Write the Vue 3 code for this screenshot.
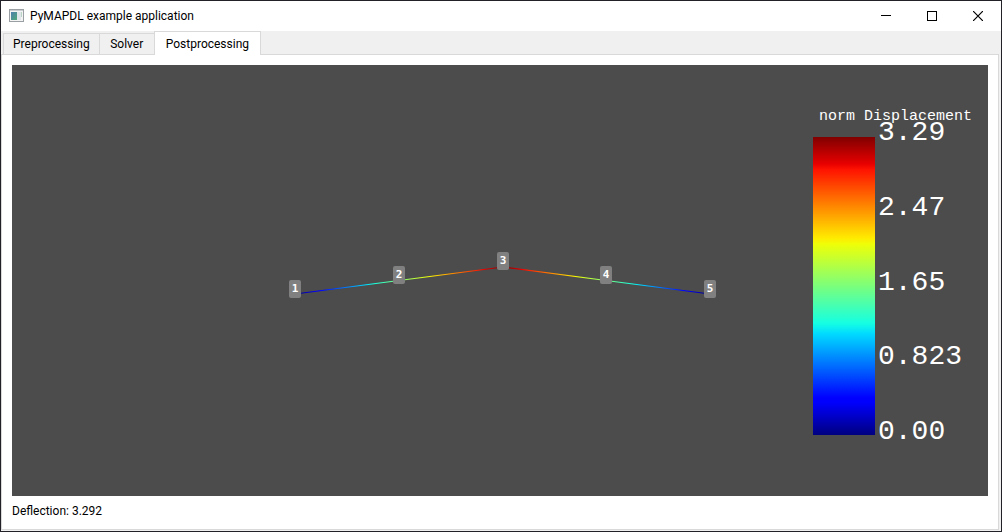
<script setup>
import { ref } from 'vue'

const tabs = ['Preprocessing', 'Solver', 'Postprocessing']
const active = ref('Postprocessing')

const ticks = ['3.29', '2.47', '1.65', '0.823', '0.00']

const nodes = [
  { id: 1, x: 283, y: 224 },
  { id: 2, x: 387, y: 210 },
  { id: 3, x: 491, y: 196 },
  { id: 4, x: 594, y: 210 },
  { id: 5, x: 698, y: 224 },
]

const jet = [
  [0, '#000080'], [0.11, '#0000ff'], [0.125, '#0000ff'], [0.34, '#00dbff'],
  [0.375, '#15ffe2'], [0.64, '#eeff08'], [0.66, '#ffec00'],
  [0.89, '#ff1300'], [0.91, '#e80000'], [1, '#800000'],
]
</script>

<template>
  <div class="window">
    <header class="titlebar">
      <svg class="app-icon" width="16" height="14" viewBox="0 0 16 14" aria-hidden="true">
        <defs>
          <linearGradient id="pane" x1="0" y1="0" x2="1" y2="1">
            <stop offset="0" stop-color="#4d7fae" />
            <stop offset="1" stop-color="#50a878" />
          </linearGradient>
        </defs>
        <rect x="0.5" y="0.5" width="14" height="12" fill="#f4f4f4" stroke="#9a9fa3" />
        <rect x="1" y="1" width="13" height="1" fill="#c9cdd0" />
        <rect x="2" y="3" width="6" height="8" fill="url(#pane)" />
        <rect x="8" y="3" width="4" height="8" fill="#dfe5e8" />
        <rect x="12" y="3" width="1" height="5" fill="#b9d3c4" />
      </svg>
      <h1 class="title">PyMAPDL example application</h1>
      <button class="control" type="button" aria-label="Minimize">
        <svg width="10" height="10" viewBox="0 0 10 10" shape-rendering="crispEdges"><path d="M0 4.5H10" stroke="#000" /></svg>
      </button>
      <button class="control" type="button" aria-label="Maximize">
        <svg width="10" height="10" viewBox="0 0 10 10" shape-rendering="crispEdges"><rect x="0.5" y="0.5" width="9" height="9" fill="none" stroke="#000" /></svg>
      </button>
      <button class="control" type="button" aria-label="Close">
        <svg width="10" height="10" viewBox="0 0 10 10"><path d="M0 0L10 10M10 0L0 10" stroke="#000" stroke-width="1.2" /></svg>
      </button>
    </header>

    <nav class="tabs" role="tablist">
      <button
        v-for="tab in tabs"
        :key="tab"
        type="button"
        role="tab"
        class="tab"
        :class="{ active: tab === active }"
        :aria-selected="tab === active"
        @click="active = tab"
      >{{ tab }}</button>
    </nav>

    <main class="pane">
      <section class="plot">
        <svg class="scene" viewBox="0 0 976 431" role="img" aria-label="Beam displacement">
          <defs>
            <linearGradient id="rise" gradientUnits="userSpaceOnUse" x1="283" y1="0" x2="491" y2="0">
              <stop v-for="s in jet" :key="s[0]" :offset="s[0]" :stop-color="s[1]" />
            </linearGradient>
            <linearGradient id="fall" gradientUnits="userSpaceOnUse" x1="698" y1="0" x2="491" y2="0">
              <stop v-for="s in jet" :key="s[0]" :offset="s[0]" :stop-color="s[1]" />
            </linearGradient>
          </defs>
          <path d="M283 229L387 215.500L491 202" stroke="url(#rise)" stroke-width="1.200" fill="none" />
          <path d="M491 202L594 215.500L698 229" stroke="url(#fall)" stroke-width="1.200" fill="none" />
          <g v-for="n in nodes" :key="n.id">
            <rect :x="n.x - 6" :y="n.y - 9" width="12" height="18" rx="2" fill="#808080" />
            <text class="node-label" :x="n.x" :y="n.y + 3">{{ n.id }}</text>
          </g>
        </svg>
        <aside class="legend">
          <h2 class="legend-title">norm Displacement</h2>
          <div class="scale">
            <div class="bar"></div>
            <ul class="ticks">
              <li v-for="t in ticks" :key="t">{{ t }}</li>
            </ul>
          </div>
        </aside>
      </section>
      <p class="status">Deflection: 3.292</p>
    </main>
  </div>
</template>

<style>
body {
  margin: 0;
}
</style>

<style scoped>
.window {
  box-sizing: border-box;
  display: flex;
  flex-direction: column;
  min-height: 100vh;
  border: 1px solid #222127;
  background: #f0f0f0;
  color: #000;
  font-family: Roboto, "Noto Sans", sans-serif;
  font-size: 12px;
}

.titlebar {
  display: flex;
  align-items: center;
  height: 30px;
  padding-left: 8px;
  background: #fff;
}

.title {
  flex: 1;
  margin: 0 0 0 5px;
  font-size: 12px;
  font-weight: 400;
}

.control {
  display: flex;
  align-items: center;
  justify-content: center;
  width: 46px;
  height: 28px;
  padding: 0;
  border: 0;
  background: transparent;
}

.tabs {
  display: flex;
  align-items: flex-end;
  height: 23px;
  padding-left: 2px;
}

.tab {
  box-sizing: border-box;
  min-width: 56px;
  height: 21px;
  margin-right: -1px;
  padding: 0 9px;
  border: 1px solid #d9d9d9;
  border-bottom: 0;
  background: #f0f0f0;
  color: #000;
  font: inherit;
  line-height: 20px;
}

.tab.active {
  position: relative;
  height: 24px;
  margin-bottom: -1px;
  padding: 0 11px;
  background: #fff;
}

.pane {
  display: flex;
  flex: 1;
  flex-direction: column;
  margin: 0 2px 1px 0;
  padding: 10px;
  border: 1px solid #d9d9d9;
  background: #fff;
}

.plot {
  position: relative;
  flex: 1;
  min-height: 400px;
  background: #4c4c4c;
}

.scene {
  position: absolute;
  width: 100%;
  height: 100%;
}

.node-label {
  fill: #fff;
  font-family: "DejaVu Sans Mono", monospace;
  font-size: 11px;
  font-weight: 700;
  text-anchor: middle;
}

.legend {
  position: absolute;
  top: 10%;
  right: 16px;
  bottom: 12%;
  display: flex;
  flex-direction: column;
  color: #fff;
  font-family: "Liberation Mono", monospace;
}

.legend-title {
  margin: 0 0 11px 6px;
  font-size: 15px;
  font-weight: 400;
  line-height: 18px;
}

.scale {
  display: flex;
  flex: 1;
  gap: 3px;
}

.bar {
  width: 62px;
  margin-bottom: 9px;
  background: linear-gradient(to top, #000080, #0000ff 11%, #0000ff 12.5%, #00dbff 34%, #15ffe2 37.5%, #eeff08 64%, #ffec00 66%, #ff1300 89%, #e80000 91%, #800000);
}

.ticks {
  display: flex;
  flex-direction: column;
  justify-content: space-between;
  margin: -18px 0 -2px;
  padding: 0;
  list-style: none;
  font-size: 28px;
  line-height: 28px;
}

.status {
  margin: 7px 0 0;
  line-height: 16px;
}
</style>
